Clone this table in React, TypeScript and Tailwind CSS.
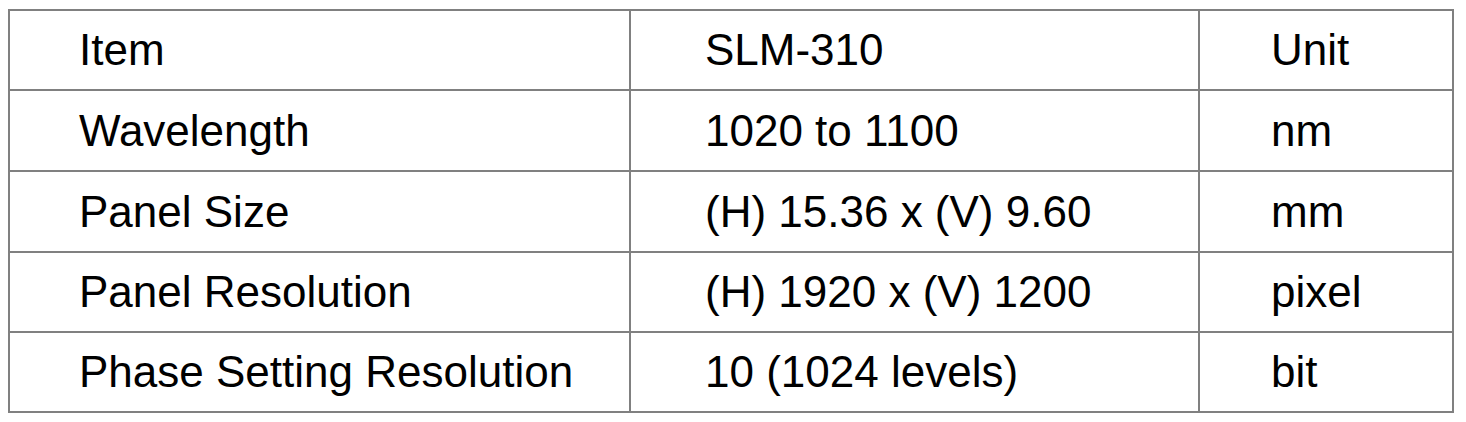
import React from "react";

const rows: [string, string, string][] = [
  ["Item", "SLM-310", "Unit"],
  ["Wavelength", "1020 to 1100", "nm"],
  ["Panel Size", "(H) 15.36 x (V) 9.60", "mm"],
  ["Panel Resolution", "(H) 1920 x (V) 1200", "pixel"],
  ["Phase Setting Resolution", "10 (1024 levels)", "bit"],
];

const heights = ["h-[80px]", "h-[81px]", "h-[81px]", "h-[80px]", "h-[78px]"];

export default function App() {
  return (
    <div
      className="w-[1466px] h-[422px] bg-white pl-[8px] pt-[9px]"
      style={{ fontFamily: '"Liberation Sans", Arial, sans-serif' }}
    >
      <div className="w-[1446px] border-2 border-[#808080] flex flex-col">
        {rows.map((r, i) => (
          <div
            key={i}
            className={`flex shrink-0 ${heights[i]} ${i < rows.length - 1 ? "border-b-2 border-[#808080]" : ""}`}
          >
            <div className="w-[621px] shrink-0 flex items-center pl-[69px] border-r-2 border-[#808080] text-[44px] text-black leading-none whitespace-nowrap">
              {r[0]}
            </div>
            <div className="w-[569px] shrink-0 flex items-center pl-[74px] border-r-2 border-[#808080] text-[44px] text-black leading-none whitespace-nowrap">
              {r[1]}
            </div>
            <div className="flex-1 flex items-center pl-[71px] text-[44px] text-black leading-none whitespace-nowrap">
              {r[2]}
            </div>
          </div>
        ))}
      </div>
    </div>
  );
}
